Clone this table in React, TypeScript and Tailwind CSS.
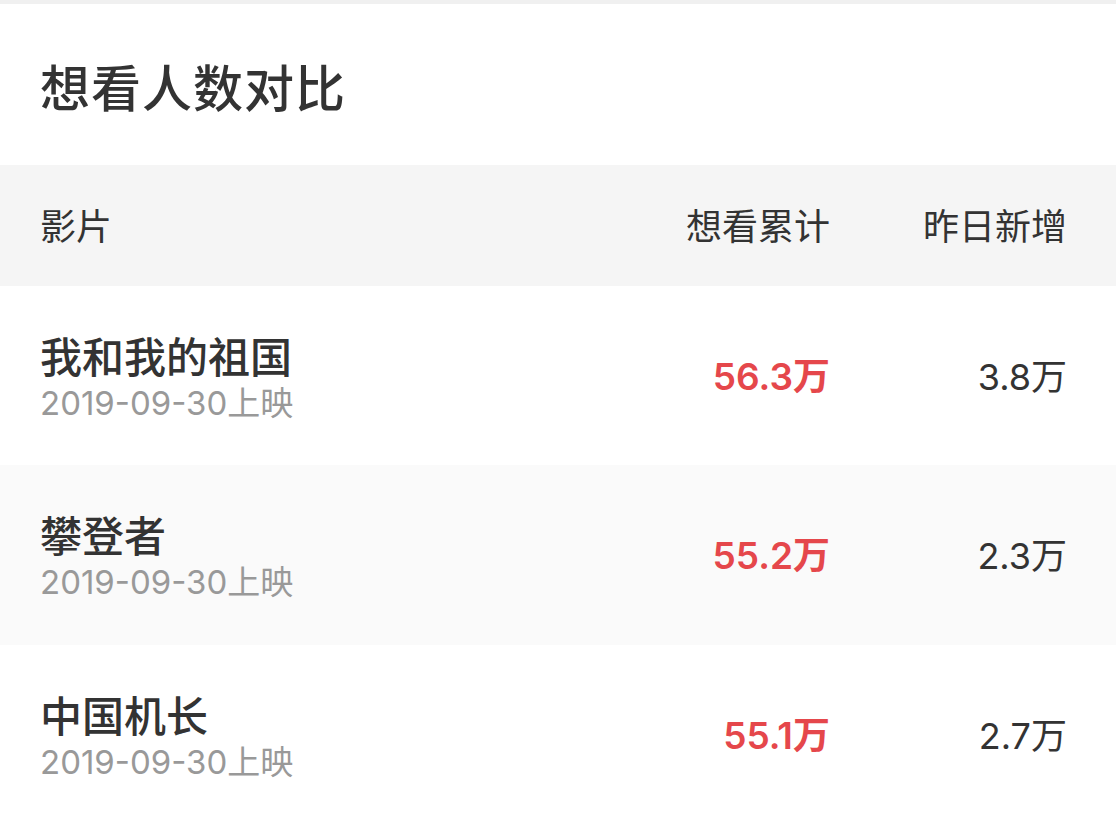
import React from "react";

const rows = [
  { name: "我和我的祖国", date: "2019-09-30上映", total: "56.3万", inc: "3.8万", bg: "bg-white", h: "h-[179px]" },
  { name: "攀登者", date: "2019-09-30上映", total: "55.2万", inc: "2.3万", bg: "bg-[#fafafa]", h: "h-[180px]" },
  { name: "中国机长", date: "2019-09-30上映", total: "55.1万", inc: "2.7万", bg: "bg-white", h: "h-[180px]" },
];

const cjk = { fontFamily: '"Noto Sans CJK SC", "Noto Sans", sans-serif' };
const num = { fontFamily: 'Inter, "Noto Sans CJK SC", sans-serif' };

export default function App() {
  return (
    <div className="w-[1116px] h-[822px] overflow-hidden bg-white flex flex-col text-[#333]" style={cjk}>
      <div className="h-[4px] bg-[#f0f0f0] shrink-0" />
      <div className="h-[161px] shrink-0 flex items-center pl-[40px]">
        <h1 className="text-[50px] leading-none font-medium text-[#333] tracking-[1px]">想看人数对比</h1>
      </div>
      <div className="h-[121px] shrink-0 bg-[#f5f5f5] flex items-center pl-[40px] pr-[49px] pb-[4px] text-[36px] text-[#333]">
        <div className="flex-1">影片</div>
        <div className="w-[200px] text-right">想看累计</div>
        <div className="w-[237px] text-right">昨日新增</div>
      </div>
      {rows.map((r) => (
        <div key={r.name} className={`${r.bg} ${r.h} shrink-0 flex items-center pl-[40px] pr-[49px]`}>
          <div className="flex-1 flex flex-col">
            <div className="text-[42px] leading-[54px] font-medium text-[#333]">{r.name}</div>
            <div className="text-[33px] leading-[42px] text-[#999]" style={num}>{r.date}</div>
          </div>
          <div className="w-[200px] text-right text-[37px] font-semibold text-[#e5474b] pt-[2px]" style={num}>{r.total}</div>
          <div className="w-[237px] text-right text-[36px] text-[#333] pt-[2px]" style={num}>{r.inc}</div>
        </div>
      ))}
    </div>
  );
}
